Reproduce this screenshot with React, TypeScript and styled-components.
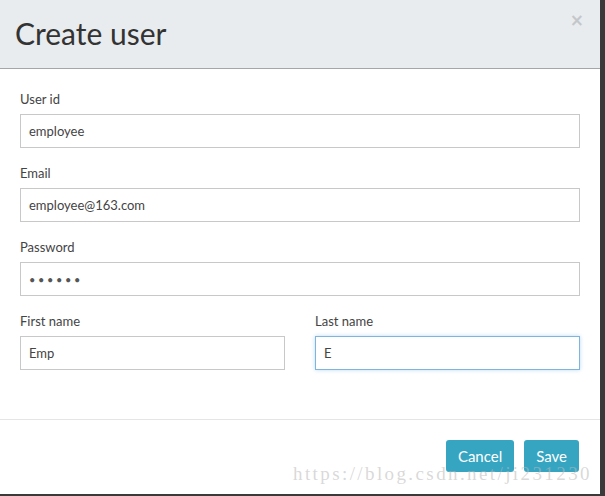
import styled, { createGlobalStyle } from "styled-components";

const GlobalStyle = createGlobalStyle`
  html, body {
    margin: 0;
    padding: 0;
    background: #3a3a3a;
  }
  body {
    font-family: Lato, "Open Sans", "Liberation Sans", sans-serif;
  }
`;

const Modal = styled.div`
  position: relative;
  width: 600px;
  height: 494px;
  background: #fff;
  display: flex;
  flex-direction: column;
  overflow: hidden;
`;

const Header = styled.div`
  display: flex;
  justify-content: space-between;
  align-items: flex-start;
  height: 69px;
  box-sizing: border-box;
  padding: 0 16px 0 15px;
  background: #e8ecef;
  border-bottom: 1px solid #a3a7aa;
`;

const Title = styled.h1`
  margin: 13px 0 0;
  font-size: 30px;
  line-height: 40px;
  font-weight: 400;
  color: #333;
`;

const Close = styled.button`
  margin-top: 8px;
  padding: 0;
  border: 0;
  background: none;
  font-family: "DejaVu Sans", sans-serif;
  font-size: 17px;
  line-height: 24px;
  font-weight: 700;
  color: #c4c7ca;
`;

const Body = styled.div`
  padding: 21px 20px 0;
  height: 351px;
  box-sizing: border-box;
  border-bottom: 1px solid #e5e5e5;
`;

const Group = styled.div`
  margin-bottom: 16px;
`;

const Row = styled.div`
  display: grid;
  grid-template-columns: 1fr 1fr;
  column-gap: 30px;
`;

const Label = styled.label`
  display: block;
  font-size: 13px;
  line-height: 18px;
  color: #444;
  margin-bottom: 6px;
`;

const Input = styled.input<{ $focused?: boolean }>`
  display: block;
  width: 100%;
  height: 34px;
  box-sizing: border-box;
  padding: 0 8px;
  font-family: inherit;
  font-size: 13px;
  color: #444;
  background: #fff;
  border: 1px solid ${(p) => (p.$focused ? "#7fb4dc" : "#c8c8c8")};
  box-shadow: ${(p) =>
    p.$focused ? "0 0 4px rgba(102, 175, 233, 0.45)" : "none"};
  outline: none;
  border-radius: 0;

  &[type="password"] {
    font-size: 11px;
    letter-spacing: 2.6px;
    color: #555;
  }
`;

const Footer = styled.div`
  display: flex;
  justify-content: flex-end;
  gap: 10px;
  padding: 20px 21px 0;
`;

const Button = styled.button`
  height: 32px;
  padding: 0 12px;
  border: 0;
  border-radius: 3px;
  background: #36a5c2;
  color: #fff;
  font-family: inherit;
  font-size: 15px;
`;

const Watermark = styled.div`
  position: absolute;
  left: 293px;
  top: 462px;
  font-family: "Liberation Serif", "DejaVu Serif", serif;
  font-size: 19px;
  line-height: 24px;
  letter-spacing: 2.4px;
  color: rgba(185, 185, 185, 0.55);
  pointer-events: none;
  white-space: nowrap;
`;

export default function App() {
  return (
    <>
      <GlobalStyle />
      <Modal>
        <Header>
          <Title>Create user</Title>
          <Close>×</Close>
        </Header>
        <Body>
          <Group>
            <Label>User id</Label>
            <Input value="employee" readOnly />
          </Group>
          <Group>
            <Label>Email</Label>
            <Input value="employee@163.com" readOnly />
          </Group>
          <Group>
            <Label>Password</Label>
            <Input type="password" value="123456" readOnly />
          </Group>
          <Row>
            <Group>
              <Label>First name</Label>
              <Input value="Emp" readOnly />
            </Group>
            <Group>
              <Label>Last name</Label>
              <Input value="E" readOnly $focused />
            </Group>
          </Row>
        </Body>
        <Footer>
          <Button>Cancel</Button>
          <Button>Save</Button>
        </Footer>
        <Watermark>https://blog.csdn.net/ji231230</Watermark>
      </Modal>
    </>
  );
}
